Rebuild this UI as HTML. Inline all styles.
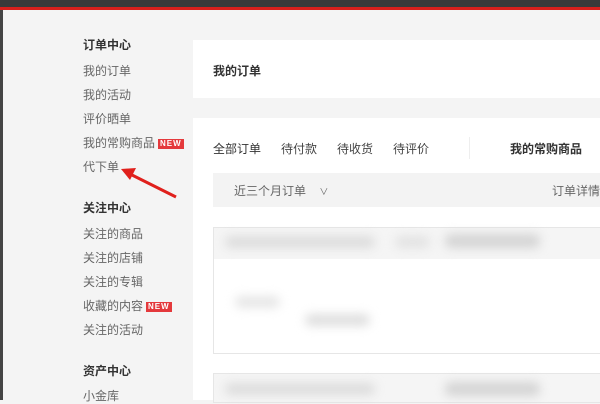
<!DOCTYPE html><html><head><meta charset="utf-8"><style>
*{margin:0;padding:0;box-sizing:border-box}
body{width:600px;height:400px;overflow:hidden;background:#f4f4f4;position:relative;font-family:"Liberation Sans","Noto Sans CJK SC",sans-serif;font-size:12px;color:#666}
.a{position:absolute}
.h{font-weight:bold;color:#333;font-size:12px}
.l{left:83px}
.new{display:inline-block;background:#e4393c;color:#fff;font-size:8px;font-weight:bold;letter-spacing:1px;padding:0 2px;line-height:10px;height:10px;vertical-align:1px;margin-left:3px}
.blur{position:absolute;background:#e2e2e2;filter:blur(5px);border-radius:6px}
</style></head><body>
<div class="a" style="left:0;top:0;width:600px;height:7px;background:#3a3a3a"></div>
<div class="a" style="left:0;top:7px;width:600px;height:3px;background:#d9201c"></div>
<div class="a" style="left:0;top:10px;width:3px;height:390px;background:#444"></div>
<div class="a h l" style="top:36px">订单中心</div>
<div class="a l" style="top:62px">我的订单</div>
<div class="a l" style="top:86px">我的活动</div>
<div class="a l" style="top:110px">评价晒单</div>
<div class="a l" style="top:134px">我的常购商品<span class="new">NEW</span></div>
<div class="a l" style="top:158px">代下单</div>
<div class="a h l" style="top:199px">关注中心</div>
<div class="a l" style="top:225px">关注的商品</div>
<div class="a l" style="top:249px">关注的店铺</div>
<div class="a l" style="top:273px">关注的专辑</div>
<div class="a l" style="top:297px">收藏的内容<span class="new">NEW</span></div>
<div class="a l" style="top:321px">关注的活动</div>
<div class="a h l" style="top:362px">资产中心</div>
<div class="a l" style="top:387px">小金库</div>
<svg class="a" style="left:0;top:0" width="600" height="400"><line x1="176" y1="197" x2="128" y2="173" stroke="#e0201c" stroke-width="3"/><polygon points="121,169 136,168 130,180" fill="#e0201c"/></svg>
<div class="a" style="left:193px;top:40px;width:407px;height:58px;background:#fff"></div>
<div class="a h" style="left:213px;top:62px">我的订单</div>
<div class="a" style="left:193px;top:118px;width:407px;height:282px;background:#fff"></div>
<div class="a" style="left:213px;top:140px;color:#333">全部订单</div>
<div class="a" style="left:281px;top:140px;color:#444">待付款</div>
<div class="a" style="left:337px;top:140px;color:#444">待收货</div>
<div class="a" style="left:393px;top:140px;color:#444">待评价</div>
<div class="a" style="left:469px;top:137px;width:1px;height:22px;background:#eee"></div>
<div class="a h" style="left:510px;top:140px">我的常购商品</div>
<div class="a" style="left:213px;top:173px;width:387px;height:34px;background:#f3f3f3"></div>
<div class="a" style="left:234px;top:182px;color:#666">近三个月订单 <span style="margin-left:10px;font-size:9px">&#x2228;</span></div>
<div class="a" style="left:552px;top:182px;color:#666">订单详情</div>
<div class="a" style="left:213px;top:227px;width:390px;height:127px;border:1px solid #e6e6e6"></div>
<div class="a" style="left:214px;top:228px;width:390px;height:31px;background:#f5f5f5"></div>
<div class="blur" style="left:225px;top:236px;width:150px;height:12px;background:#dcdcdc"></div>
<div class="blur" style="left:395px;top:236px;width:35px;height:12px"></div>
<div class="blur" style="left:445px;top:234px;width:95px;height:14px;background:#d4d4d4"></div>
<div class="blur" style="left:235px;top:296px;width:45px;height:12px;background:#e6e6e6"></div>
<div class="blur" style="left:305px;top:314px;width:65px;height:12px;background:#dedede"></div>
<div class="a" style="left:213px;top:373px;width:390px;height:30px;border:1px solid #e6e6e6;background:#f5f5f5"></div>
<div class="blur" style="left:225px;top:383px;width:150px;height:12px;background:#dcdcdc"></div>
<div class="blur" style="left:445px;top:382px;width:95px;height:14px;background:#d4d4d4"></div>
</body></html>
